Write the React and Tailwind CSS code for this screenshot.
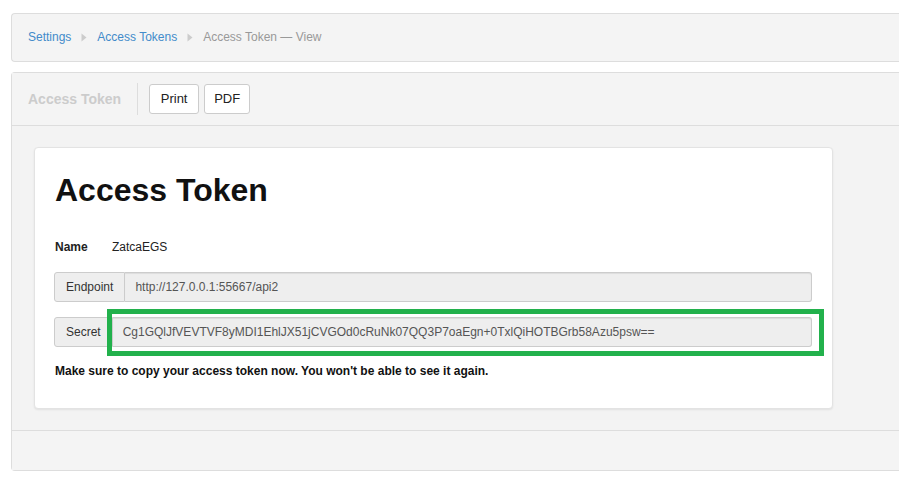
import React from 'react';

const Caret = () => (
  <svg width="6" height="9" viewBox="0 0 6 9" className="mx-[10px] mt-[1px]">
    <path d="M0.5 0.5 L5.5 4.5 L0.5 8.5 Z" fill="#cccccc" />
  </svg>
);

const InputGroup = ({ label, value }) => (
  <div className="flex h-[30px] w-[758px] text-[12px]">
    <span className="flex items-center rounded-l-[3px] border border-[#cccccc] bg-[#eeeeee] px-[11px] text-[#333333]">
      {label}
    </span>
    <div className="flex flex-1 items-center rounded-r-[3px] border border-l-0 border-[#cccccc] bg-[#eeeeee] px-[10px] text-[#555555] shadow-[inset_0_1px_1px_rgba(0,0,0,0.075)]">
      {value}
    </div>
  </div>
);

export default function App() {
  return (
    <div
      className="min-h-screen w-[899px] overflow-hidden bg-white pl-[11px] pt-[13px]"
      style={{ fontFamily: '"Liberation Sans", Arial, sans-serif' }}
    >
      {/* breadcrumb */}
      <div className="flex h-[49px] items-center rounded-l-[4px] border border-r-0 border-[#dddddd] bg-[#f4f4f4] pb-[2px] pl-[16px] text-[12px]">
        <span className="text-[#428bca]">Settings</span>
        <Caret />
        <span className="text-[#428bca]">Access Tokens</span>
        <Caret />
        <span className="text-[#999999]">Access Token — View</span>
      </div>

      {/* main panel */}
      <div className="mt-[10px] rounded-l-[4px] border border-r-0 border-[#dddddd] bg-[#f3f3f3]">
        <div className="flex h-[53px] items-center border-b border-[#dddddd] bg-[#f4f4f4] pl-[16px]">
          <span className="text-[14px] font-bold text-[#cccccc]">Access Token</span>
          <div className="ml-[16px] mr-[11px] h-[32px] w-px bg-[#dddddd]" />
          <div className="flex gap-[5px]">
            <button className="h-[30px] w-[50px] rounded-[3px] border border-[#cccccc] bg-white text-[13px] text-[#222222]">
              Print
            </button>
            <button className="h-[30px] w-[46px] rounded-[3px] border border-[#cccccc] bg-white text-[13px] text-[#222222]">
              PDF
            </button>
          </div>
        </div>

        <div className="px-[22px] pb-[21px] pt-[21px]">
          <div className="relative h-[262px] w-[799px] rounded-[4px] border border-[#e3e3e3] bg-white px-[20px] pt-[25px] shadow-[0_1px_2px_rgba(0,0,0,0.08)]">
            <h1 className="text-[32px] font-bold leading-[35px] text-[#111111]">Access Token</h1>
            <div className="mt-[30px] flex text-[12px] text-[#222222]">
              <span className="w-[57px] font-bold">Name</span>
              <span>ZatcaEGS</span>
            </div>
            <div className="mt-[16px] -ml-px flex flex-col gap-[15px]">
              <InputGroup label="Endpoint" value="http://127.0.0.1:55667/api2" />
              <InputGroup
                label="Secret"
                value="Cg1GQlJfVEVTVF8yMDI1EhlJX51jCVGOd0cRuNk07QQ3P7oaEgn+0TxlQiHOTBGrb58Azu5psw=="
              />
            </div>
            <p className="mt-[15px] text-[12px] font-bold text-[#111111]">
              Make sure to copy your access token now. You won't be able to see it again.
            </p>
            <div className="pointer-events-none absolute left-[72px] top-[161px] h-[47px] w-[717px] border-[5px] border-[#22b14c]" />
          </div>
        </div>

        <div className="h-[40px] border-t border-[#dddddd] bg-[#f4f4f4]" />
      </div>
    </div>
  );
}
